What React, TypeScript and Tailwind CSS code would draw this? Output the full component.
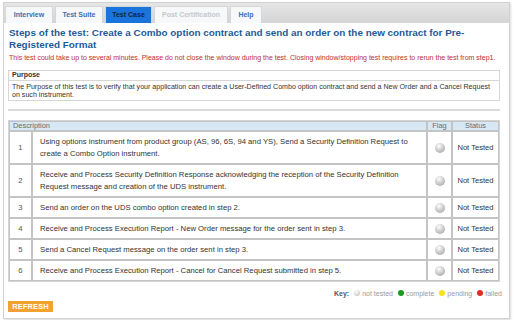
import React from "react";

const rows: { n: number; text: string; tall?: boolean }[] = [
  {
    n: 1,
    text: "Using options instrument from product group (AS, 96, 6S, 94 and YS), Send a Security Definition Request to create a Combo Option instrument.",
    tall: true,
  },
  {
    n: 2,
    text: "Receive and Process Security Definition Response acknowledging the reception of the Security Definition Request message and creation of the UDS instrument.",
    tall: true,
  },
  { n: 3, text: "Send an order on the UDS combo option created in step 2." },
  { n: 4, text: "Receive and Process Execution Report - New Order message for the order sent in step 3." },
  { n: 5, text: "Send a Cancel Request message on the order sent in step 3." },
  { n: 6, text: "Receive and Process Execution Report - Cancel for Cancel Request submitted in step 5." },
];

function Ball() {
  return (
    <span
      className="inline-block w-[10px] h-[10px] rounded-full"
      style={{ background: "radial-gradient(circle at 40% 30%, #ffffff 0%, #d8d8d8 35%, #9a9a9a 100%)" }}
    />
  );
}

function Dot({ c }: { c: string }) {
  return (
    <span
      className="inline-block w-[6px] h-[6px] rounded-full mr-[2px] align-[-0.5px]"
      style={{ background: c }}
    />
  );
}

export default function App() {
  const tab = "h-[17px] flex items-center justify-center border border-[#d6d6d6] border-b-0 text-[7px] font-bold";
  return (
    <div className="w-[513px] h-[320px] bg-white pt-[2px] pl-[3px]" style={{ fontFamily: '"Liberation Sans", Arial, sans-serif' }}>
      <div className="w-[507px] h-[317px] border border-[#d2d2d2] shadow-[1px_1px_2px_rgba(0,0,0,0.15)] flex flex-col">
        <div className="h-[20px] shrink-0 bg-gradient-to-b from-[#e6e6e6] to-[#d4d4d4] flex items-end pl-[1px] gap-[2px]">
          <div className={`${tab} w-[48px] bg-[#f7f8fa] text-[#3a6fb0]`}>Interview</div>
          <div className={`${tab} w-[48px] bg-[#f7f8fa] text-[#3a6fb0]`}>Test Suite</div>
          <div className={`${tab} w-[47px] bg-[#1b73dc] border-[#1b73dc] text-[#0c2446]`}>Test Case</div>
          <div className={`${tab} w-[74px] bg-[#f7f8fa] text-[#c4c8ce]`}>Post Certification</div>
          <div className={`${tab} w-[32px] bg-[#f7f8fa] text-[#3a6fb0]`}>Help</div>
        </div>
        <div className="pl-[4px] pr-[9px] flex flex-col">
          <div className="mt-[4px] ml-[1px] h-[24px] text-[9.9px] leading-[12px] font-bold text-[#1d5a9c]">
            Steps of the test: Create a Combo option contract and send an order on the new contract for Pre-Registered Format
          </div>
          <div className="mt-[2px] ml-[1px] h-[10px] text-[7px] leading-[10px] text-[#c0302a] whitespace-nowrap">
            This test could take up to several minutes. Please do not close the window during the test. Closing window/stopping test requires to rerun the test from step1.
          </div>
          <div className="mt-[7px] h-[31px] border border-[#d6d6d6] overflow-hidden">
            <div className="h-[10px] flex items-center px-[3px] text-[7px] font-bold text-[#333] border-b border-[#d6d6d6]">Purpose</div>
            <div className="h-[19px] px-[3px] pt-[2px] text-[7.1px] leading-[8px] text-[#333]">
              <div className="whitespace-nowrap">The Purpose of this test is to verify that your application can create a User-Defined Combo option contract and send a New Order and a Cancel Request</div>
              <div>on such instrument.</div>
            </div>
          </div>
          <div className="mt-[8px] h-[2px] bg-[#dadada]" />
          <div className="mt-[9px] border border-[#d4d4d4]">
            <table className="w-full border-separate border-spacing-0 text-[7.7px] text-[#333]">
              <thead>
                <tr className="h-[10px]">
                  <th colSpan={2} className="bg-[#d8e7f4] border border-[#c4c4c4] text-left font-normal text-[#6a6a6a] px-[3px] py-0 leading-[8px] text-[7.4px]">Description</th>
                  <th className="w-[25px] bg-[#d8e7f4] border border-[#c4c4c4] font-normal text-[#6a6a6a] py-0 leading-[8px] text-[7.4px]">Flag</th>
                  <th className="w-[47px] bg-[#d8e7f4] border border-[#c4c4c4] font-normal text-[#6a6a6a] py-0 leading-[8px] text-[7.4px]">Status</th>
                </tr>
              </thead>
              <tbody>
                {rows.map((r) => (
                  <tr key={r.n} className={r.tall ? "h-[33px]" : "h-[21px]"}>
                    <td className="w-[23px] border border-[#c4c4c4] text-center text-[#555] py-0">{r.n}</td>
                    <td className="border border-[#c4c4c4] pl-[7px] pr-[4px] py-0 leading-[12px] align-middle">{r.text}</td>
                    <td className="border border-[#c4c4c4] text-center align-middle py-0">
                      <div className="flex justify-center"><Ball /></div>
                    </td>
                    <td className="border border-[#c4c4c4] text-center text-[#333] text-[7.6px] py-0">Not Tested</td>
                  </tr>
                ))}
              </tbody>
            </table>
          </div>
          <div className="mt-[7px] h-[10px] flex justify-end items-center text-[7px] text-[#9a9a9a] gap-[5px] -mr-[2px]">
            <span className="font-bold text-[#555]">Key:</span>
            <span><Dot c="radial-gradient(circle at 40% 30%, #fff, #b8b8b8)" />not tested</span>
            <span><Dot c="#1c9a1c" />complete</span>
            <span><Dot c="#f2e41a" />pending</span>
            <span><Dot c="#e22a2a" />failed</span>
          </div>
          <div className="mt-[2px] flex">
            <span className="inline-flex items-center justify-center w-[45px] h-[11px] bg-[#f2a22e] text-white font-bold text-[7.4px] tracking-[0.2px]">REFRESH</span>
          </div>
        </div>
      </div>
    </div>
  );
}
